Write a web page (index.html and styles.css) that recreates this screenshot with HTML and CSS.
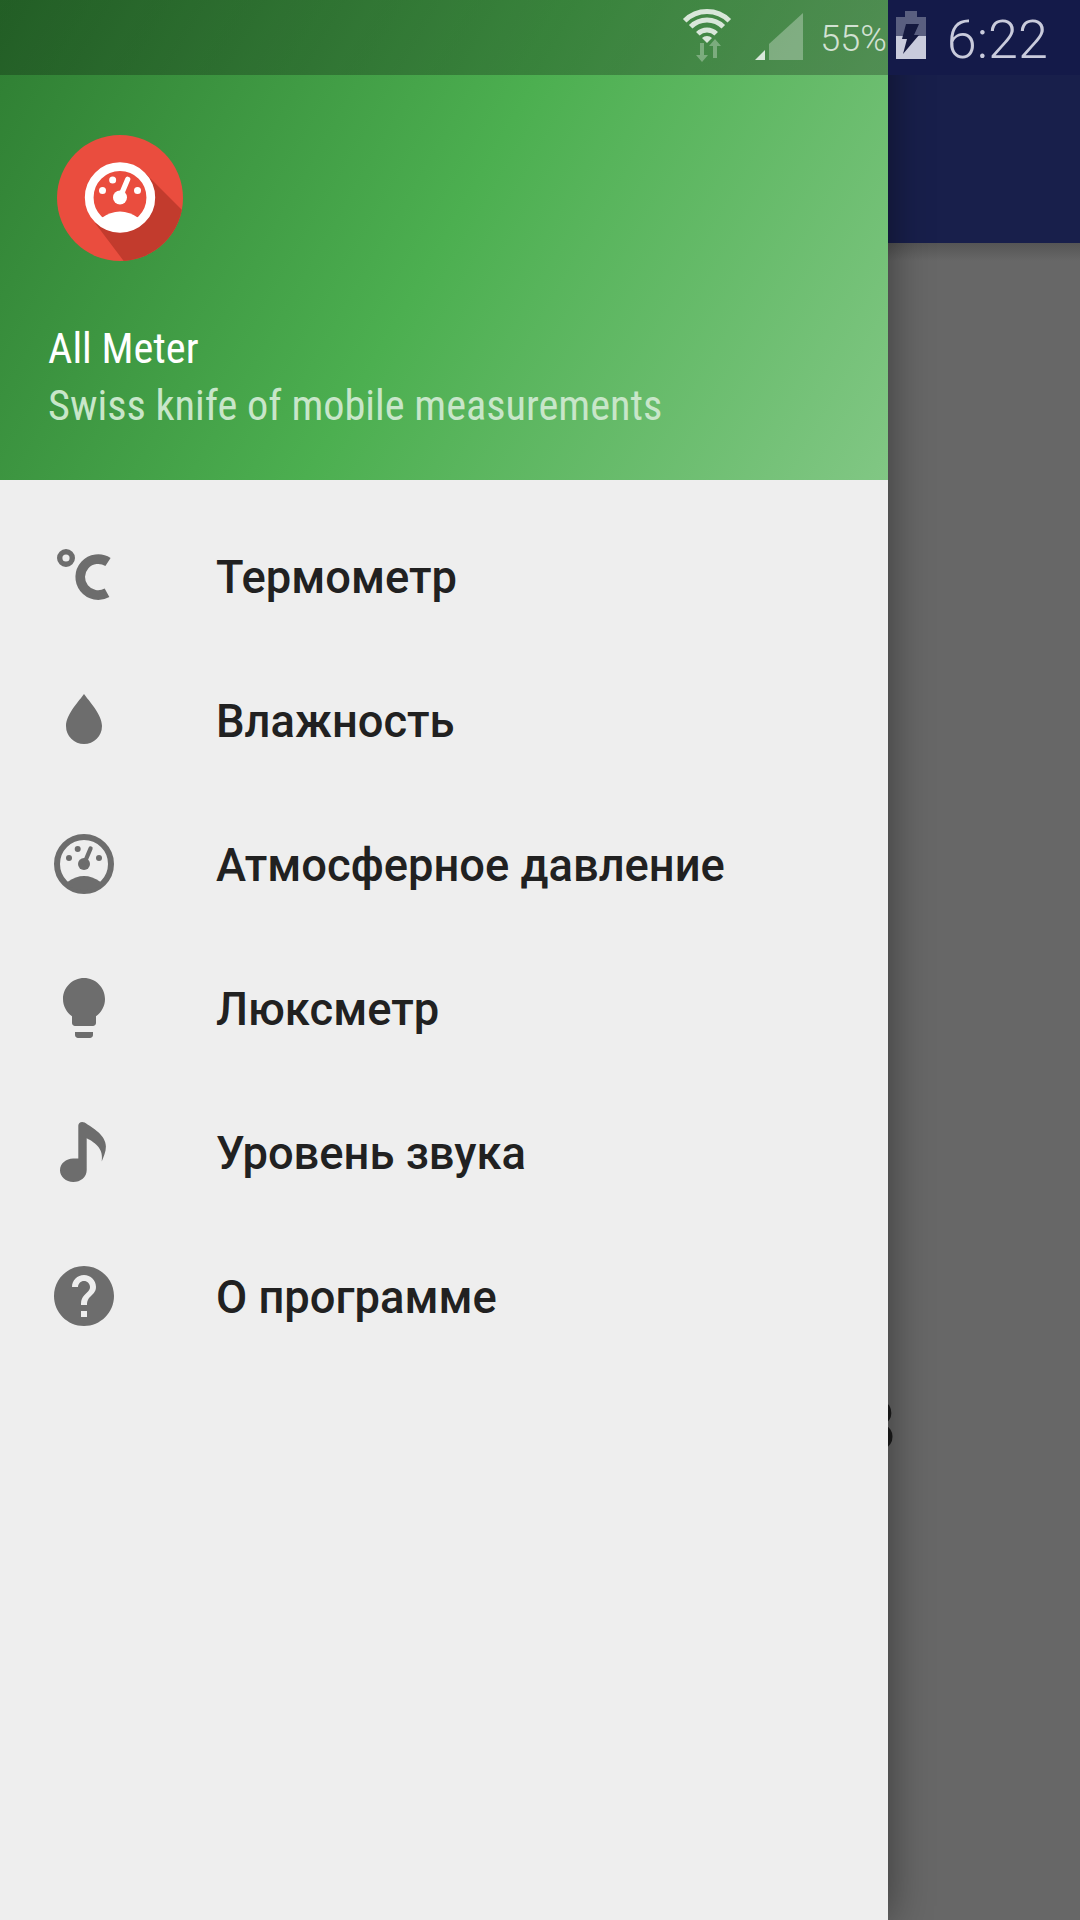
FILE: index.html
```html
<!DOCTYPE html>
<html lang="ru">
<head>
<meta charset="utf-8">
<title>All Meter</title>
<link rel="stylesheet" href="styles.css">
</head>
<body>
<div class="screen">
  <div class="app">
    <div class="appbar"></div>
    <div class="scrim"><span class="peek">8</span></div>
  </div>

  <aside class="drawer">
    <header class="drawer-head">
      <svg class="logo" viewBox="0 0 126 126">
        <defs><clipPath id="logoclip"><circle cx="63" cy="63" r="63"/></clipPath></defs>
        <circle cx="63" cy="63" r="63" fill="#ea4d3e"/>
        <path d="M88 38 L160 110 L100 170 L38 88 Z" fill="#c23b2d" clip-path="url(#logoclip)"/>
        <g transform="translate(63 62.5) scale(3.5)" fill="#fff">
          <circle r="10" fill="#ea4d3e"/>
          <circle r="8.8" fill="none" stroke="#fff" stroke-width="2.5"/>
          <circle r="2"/>
          <path d="M0 0L2.2 -5.2" stroke="#fff" stroke-width="1.5" stroke-linecap="round"/>
          <circle cx="-5" cy="-2" r="1"/><circle cx="-2.1" cy="-5" r="1"/><circle cx="5" cy="-2" r="1"/>
          <path d="M-5.4 5.9Q0 2.1 5.4 5.9L5.5 7.5L0 9L-5.5 7.5Z"/>
        </g>
      </svg>
      <div class="app-name"><span>All Meter</span></div>
      <div class="app-sub"><span>Swiss knife of mobile measurements</span></div>
    </header>

    <nav class="menu">
      <a class="item">
        <svg class="ico" viewBox="0 0 24 24"><circle cx="6" cy="6" r="2.1" fill="none" stroke="#6d6d6d" stroke-width="1.8"/><path d="M20 7.33A6 6 0 1 0 19.67 17.6" fill="none" stroke="#6d6d6d" stroke-width="3.2"/></svg>
        <span class="label">Термометр</span>
      </a>
      <a class="item">
        <svg class="ico" viewBox="0 0 24 24"><path d="M12 3.3C13.5 5.5 18 10 18 14A6 6 0 0 1 6 14C6 10 10.5 5.5 12 3.3Z"/></svg>
        <span class="label">Влажность</span>
      </a>
      <a class="item">
        <svg class="ico" viewBox="0 0 24 24"><g transform="translate(12 12)">
          <circle r="9" fill="none" stroke="#6d6d6d" stroke-width="2"/>
          <circle r="2"/>
          <path d="M0 0L2.2 -5.2" stroke="#6d6d6d" stroke-width="1.4" stroke-linecap="round"/>
          <circle cx="-5" cy="-2" r="1"/><circle cx="-2.1" cy="-5" r="1"/><circle cx="5" cy="-2" r="1"/>
          <path d="M-5.4 5.9Q0 2.1 5.4 5.9L5.5 7.5L0 9L-5.5 7.5Z"/>
        </g></svg>
        <span class="label">Атмосферное давление</span>
      </a>
      <a class="item">
        <svg class="ico" viewBox="0 0 24 24"><path d="M9 21c0 .55.45 1 1 1h4c.55 0 1-.45 1-1v-1H9v1zm3-19C8.14 2 5 5.14 5 9c0 2.38 1.19 4.47 3 5.74V17c0 .55.45 1 1 1h6c.55 0 1-.45 1-1v-2.26c1.81-1.27 3-3.36 3-5.74 0-3.86-3.14-7-7-7z"/></svg>
        <span class="label">Люксметр</span>
      </a>
      <a class="item">
        <svg class="ico" viewBox="0 0 24 24"><path d="M10.1 3.2C10.1 2.2 11.2 1.6 12.2 2.2C15 4 19.3 6.5 19.3 10.2C19.3 12 18.6 13.5 17.9 15.2C18.6 11 16 9 12.9 7.4V18C12.9 20.4 10.9 22 8.4 22C6 22 4 20.3 4 18.1C4 15.9 6 14.2 8.4 14.2H10.1Z"/></svg>
        <span class="label">Уровень звука</span>
      </a>
      <a class="item">
        <svg class="ico" viewBox="0 0 24 24"><path d="M12 2C6.48 2 2 6.48 2 12s4.48 10 10 10 10-4.48 10-10S17.52 2 12 2zm1 17h-2v-2h2v2zm2.07-7.75l-.9.92C13.45 12.9 13 13.5 13 15h-2v-.5c0-1.1.45-2.1 1.17-2.83l1.24-1.26c.37-.36.59-.86.59-1.41 0-1.1-.9-2-2-2s-2 .9-2 2H8c0-2.21 1.79-4 4-4s4 1.79 4 4c0 .88-.36 1.68-.93 2.25z"/></svg>
        <span class="label">О программе</span>
      </a>
    </nav>
  </aside>

  <div class="status">
    <svg class="st-wifi" viewBox="680 5 56 60">
      <g fill="none" stroke="#fff" stroke-width="5" stroke-opacity=".8">
        <path d="M684.7 20.7A31.5 31.5 0 0 1 729.3 20.7"/>
        <path d="M690.7 26.7A23 23 0 0 1 723.3 26.7"/>
        <path d="M697.8 33.8A13 13 0 0 1 716.2 33.8"/>
      </g>
      <path d="M702 38A7 7 0 0 1 712 38L707 43Z" fill="#fff" fill-opacity=".8"/>
      <path d="M700 43h4v12h4l-6 7l-6-7h4zM713 58V46h-4l6-7l6 7h-4v12z" fill="#fff" fill-opacity=".3"/>
    </svg>
    <svg class="st-signal" viewBox="755 13 48 47">
      <path d="M803 13V60H769V44Z" fill="#fff" fill-opacity=".3"/>
      <path d="M765 50V60H755Z" fill="#fff" fill-opacity=".8"/>
    </svg>
    <span class="st-pct">55%</span>
    <svg class="st-batt" viewBox="896 11 30 48">
      <path d="M905 11h12v6h9v20h-30v-20h9z" fill="#fff" fill-opacity=".3"/>
      <path d="M896 36h30v23h-30z" fill="#c9cbdc"/>
      <path d="M906 24h13l-5 11h5l-16 19l4-15h-5z" fill="#15193f"/>
    </svg>
    <span class="st-time">6:22</span>
  </div>
</div>
</body>
</html>
```

FILE: styles.css
```css
* { box-sizing: border-box; }
html, body { margin: 0; padding: 0; }
body { width: 1080px; height: 1920px; overflow: hidden; font-family: Roboto, "Noto Sans", sans-serif; }

.screen { position: relative; width: 1080px; height: 1920px; overflow: hidden; }

.app { display: flex; flex-direction: column; height: 100%; }
.appbar { flex: 0 0 243px; background: #181f4b; }
.scrim { flex: 1; position: relative; background: linear-gradient(#555, #676767 18px); }
.peek { position: absolute; left: 857px; top: 1148px; font-size: 70px; line-height: 1; color: #1c1c1c; }

.drawer { position: absolute; left: 0; top: 0; bottom: 0; width: 888px; display: flex; flex-direction: column; background: #eee; box-shadow: 0 0 40px rgba(0,0,0,.45); }
.drawer-head { flex: 0 0 480px; padding: 135px 0 0 48px; display: flex; flex-direction: column; background: linear-gradient(120deg, #2e7d32 0%, #4caf50 50%, #81c784 100%); }
.logo { width: 126px; height: 126px; margin: 0 0 0 9px; display: block; }
.app-name, .app-sub { white-space: nowrap; font-stretch: 75%; font-size: 42.3px; line-height: 57px; }
.app-name { margin-top: 59px; color: #fff; }
.app-sub { color: #c8e6c9; }

.menu { flex: 1; display: flex; flex-direction: column; padding-top: 24px; }
.item { flex: 0 0 144px; display: flex; align-items: center; padding-left: 48px; }
.ico { width: 72px; height: 72px; fill: #6d6d6d; flex: none; }
.label { margin: 2px 0 0 96px; font-size: 45.3px; font-weight: 500; color: #212121; white-space: nowrap; }

.status { position: absolute; left: 0; top: 0; width: 1080px; height: 75px; padding-right: 32px; display: flex; align-items: flex-start; justify-content: flex-end; background: linear-gradient(to right, rgba(0,0,0,.25) 888px, #141a49 888px); }
.st-wifi { width: 56px; height: 60px; margin-top: 5px; }
.st-signal { width: 48px; height: 47px; margin: 13px 0 0 19px; }
.st-pct { margin: 2px 0 0 17px; font-size: 36px; font-weight: 300; color: rgba(255,255,255,.75); line-height: 75px; }
.st-batt { width: 30px; height: 48px; margin: 11px 0 0 9px; }
.st-time { margin: 2px 0 0 21px; font-size: 54px; font-weight: 300; color: #c9cbdc; line-height: 75px; }
```
